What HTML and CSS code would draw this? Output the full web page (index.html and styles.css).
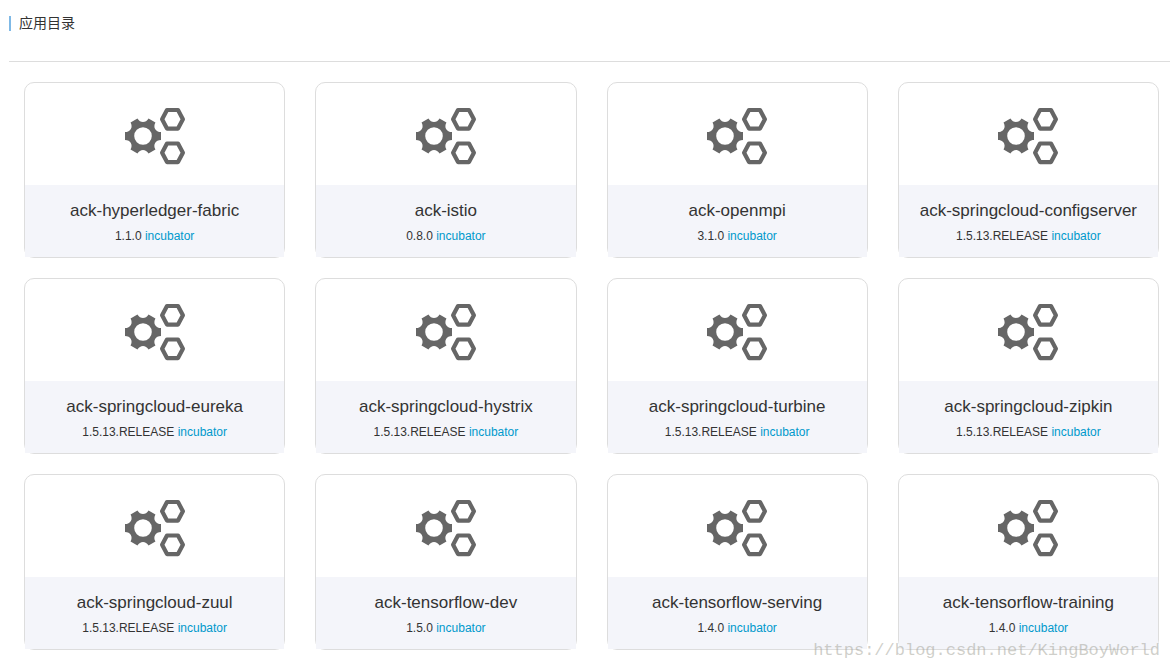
FILE: index.html
```
<!DOCTYPE html>
<html lang="zh-CN">
<head>
<meta charset="utf-8">
<title>应用目录</title>
<link rel="stylesheet" href="styles.css">
</head>
<body>
<svg class="defs" width="0" height="0" aria-hidden="true">
  <symbol id="gears" viewBox="0 0 62 58">
    <g fill="#666" fill-rule="evenodd">
      <path transform="translate(19 29)" d="M18-4V4C12.5 4 9.71 8.83 12.46 13.59L5.54 17.59C2.79 12.83-2.79 12.83-5.54 17.59L-12.46 13.59C-9.71 8.83-12.5 4-18 4V-4C-12.5-4-9.71-8.83-12.46-13.59L-5.54-17.59C-2.79-12.83 2.79-12.83 5.54-17.59L12.46-13.59C9.71-8.83 12.5-4 18-4ZM8.8 0A8.8 8.8 0 1 0-8.8 0A8.8 8.8 0 1 0 8.8 0Z"/>
    </g>
    <g fill="none" stroke="#666" stroke-width="4.2" stroke-linejoin="round">
      <path d="M38.1 12.3L43 3H54L58.9 12.3L54 21.6H43Z"/>
      <path d="M38.1 45.8L43 36.5H54L58.9 45.8L54 55.1H43Z"/>
    </g>
  </symbol>
</svg>
<header class="page-header">
  <h1 class="page-title">应用目录</h1>
</header>
<main class="catalog">
  <article class="card"><div class="card-icon"><svg class="icon" aria-hidden="true"><use href="#gears"/></svg></div><div class="card-info"><h2 class="card-name">ack-hyperledger-fabric</h2><p class="card-meta">1.1.0 <a class="repo" href="#">incubator</a></p></div></article>
  <article class="card"><div class="card-icon"><svg class="icon" aria-hidden="true"><use href="#gears"/></svg></div><div class="card-info"><h2 class="card-name">ack-istio</h2><p class="card-meta">0.8.0 <a class="repo" href="#">incubator</a></p></div></article>
  <article class="card"><div class="card-icon"><svg class="icon" aria-hidden="true"><use href="#gears"/></svg></div><div class="card-info"><h2 class="card-name">ack-openmpi</h2><p class="card-meta">3.1.0 <a class="repo" href="#">incubator</a></p></div></article>
  <article class="card"><div class="card-icon"><svg class="icon" aria-hidden="true"><use href="#gears"/></svg></div><div class="card-info"><h2 class="card-name">ack-springcloud-configserver</h2><p class="card-meta">1.5.13.RELEASE <a class="repo" href="#">incubator</a></p></div></article>
  <article class="card"><div class="card-icon"><svg class="icon" aria-hidden="true"><use href="#gears"/></svg></div><div class="card-info"><h2 class="card-name">ack-springcloud-eureka</h2><p class="card-meta">1.5.13.RELEASE <a class="repo" href="#">incubator</a></p></div></article>
  <article class="card"><div class="card-icon"><svg class="icon" aria-hidden="true"><use href="#gears"/></svg></div><div class="card-info"><h2 class="card-name">ack-springcloud-hystrix</h2><p class="card-meta">1.5.13.RELEASE <a class="repo" href="#">incubator</a></p></div></article>
  <article class="card"><div class="card-icon"><svg class="icon" aria-hidden="true"><use href="#gears"/></svg></div><div class="card-info"><h2 class="card-name">ack-springcloud-turbine</h2><p class="card-meta">1.5.13.RELEASE <a class="repo" href="#">incubator</a></p></div></article>
  <article class="card"><div class="card-icon"><svg class="icon" aria-hidden="true"><use href="#gears"/></svg></div><div class="card-info"><h2 class="card-name">ack-springcloud-zipkin</h2><p class="card-meta">1.5.13.RELEASE <a class="repo" href="#">incubator</a></p></div></article>
  <article class="card"><div class="card-icon"><svg class="icon" aria-hidden="true"><use href="#gears"/></svg></div><div class="card-info"><h2 class="card-name">ack-springcloud-zuul</h2><p class="card-meta">1.5.13.RELEASE <a class="repo" href="#">incubator</a></p></div></article>
  <article class="card"><div class="card-icon"><svg class="icon" aria-hidden="true"><use href="#gears"/></svg></div><div class="card-info"><h2 class="card-name">ack-tensorflow-dev</h2><p class="card-meta">1.5.0 <a class="repo" href="#">incubator</a></p></div></article>
  <article class="card"><div class="card-icon"><svg class="icon" aria-hidden="true"><use href="#gears"/></svg></div><div class="card-info"><h2 class="card-name">ack-tensorflow-serving</h2><p class="card-meta">1.4.0 <a class="repo" href="#">incubator</a></p></div></article>
  <article class="card"><div class="card-icon"><svg class="icon" aria-hidden="true"><use href="#gears"/></svg></div><div class="card-info"><h2 class="card-name">ack-tensorflow-training</h2><p class="card-meta">1.4.0 <a class="repo" href="#">incubator</a></p></div></article>
</main>
<div class="watermark">https://blog.csdn.net/KingBoyWorld</div>
</body>
</html>
```
FILE: styles.css
```
* {
  box-sizing: border-box;
}

body {
  position: relative;
  margin: 0;
  background: #fff;
  color: #333;
  font-family: "Liberation Sans", "Noto Sans CJK SC", sans-serif;
}

.defs {
  position: absolute;
}

.page-header {
  margin-left: 9px;
  padding: 16px 0 30px;
  border-bottom: 1px solid #ddd;
}

.page-title {
  margin: 0;
  padding-left: 8px;
  border-left: 2px solid #7fb9e6;
  font-size: 14px;
  font-weight: 400;
  line-height: 15px;
}

.catalog {
  display: grid;
  grid-template-columns: repeat(4, minmax(0, 1fr));
  gap: 20px 30px;
  padding: 20px 11px 20px 24px;
}

.card {
  border: 1px solid #ddd;
  border-radius: 10px;
  text-align: center;
}

.card-icon {
  display: flex;
  justify-content: center;
  padding: 24px 0 20px;
}

.icon {
  width: 62px;
  height: 58px;
}

.card-info {
  padding: 14px 0 13px;
  background: #f4f5fa;
}

.card-name {
  margin: 0 0 5px;
  font-size: 17px;
  font-weight: 400;
  line-height: 24px;
}

.card-meta {
  margin: 0;
  font-size: 12px;
  line-height: 16px;
}

.repo {
  color: #0099cc;
  text-decoration: none;
}

.watermark {
  position: absolute;
  right: 10px;
  bottom: 9px;
  color: rgba(160, 160, 150, 0.5);
  font-family: "Liberation Mono", monospace;
  font-size: 17px;
  line-height: 20px;
}
```
